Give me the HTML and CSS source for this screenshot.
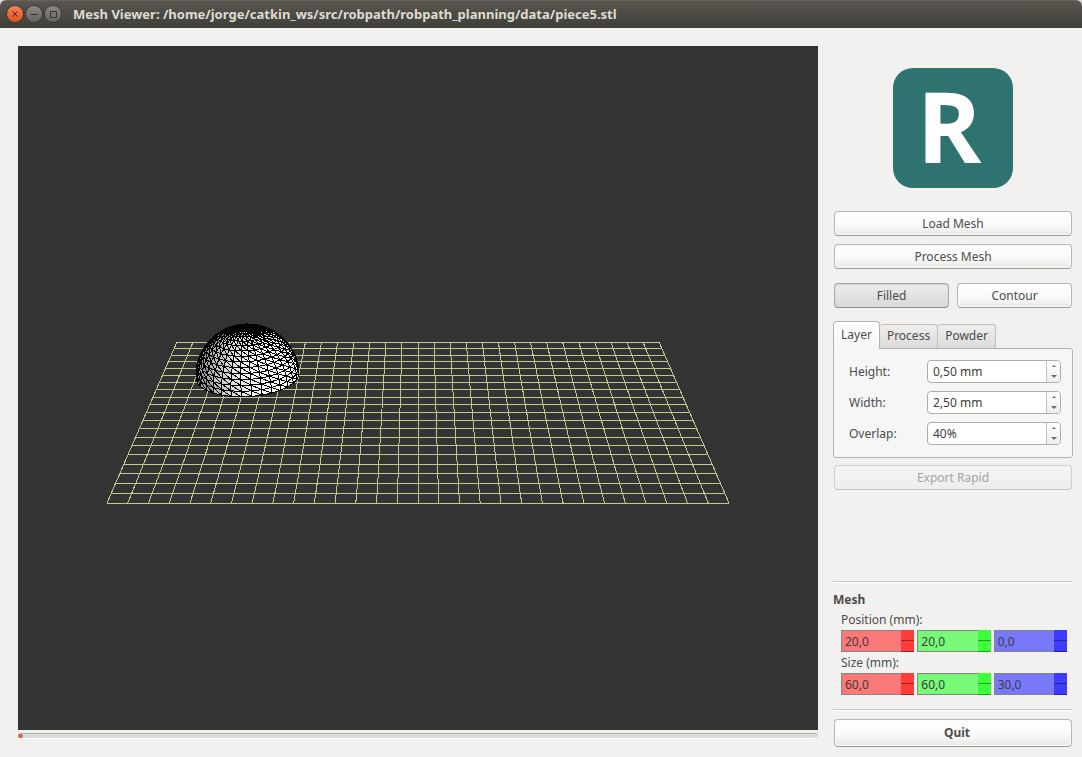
FILE: index.html
```html
<!DOCTYPE html>
<html lang="en">
<head>
<meta charset="utf-8">
<title>Mesh Viewer</title>
<link rel="stylesheet" href="styles.css">
</head>
<body>
<div class="window">
  <header class="titlebar">
    <div class="controls">
      <button class="control close" type="button" aria-label="Close">
        <svg viewBox="0 0 16 16"><path d="M5.500 5.500l5 5M10.500 5.500l-5 5"/></svg>
      </button>
      <button class="control" type="button" aria-label="Minimize">
        <svg viewBox="0 0 16 16"><path d="M4.500 8.500h7"/></svg>
      </button>
      <button class="control" type="button" aria-label="Maximize">
        <svg viewBox="0 0 16 16"><path d="M5.500 5.500h6v6h-6z"/></svg>
      </button>
    </div>
    <h1 class="title">Mesh Viewer: /home/jorge/catkin_ws/src/robpath/robpath_planning/data/piece5.stl</h1>
  </header>

  <main class="content">
    <section class="viewer">
      <div class="viewport">
        <svg class="scene" id="scene" viewBox="0 0 800 684" role="img" aria-label="Mesh on the work plane"></svg>
      </div>
      <input class="progress" type="range" min="0" max="100" value="0" aria-label="Layer position">
    </section>

    <aside class="panel">
      <div class="logo">R</div>

      <div class="stack">
        <button class="btn" type="button">Load Mesh</button>
        <button class="btn" type="button">Process Mesh</button>
      </div>

      <div class="pair">
        <button class="btn pressed" type="button" aria-pressed="true">Filled</button>
        <button class="btn" type="button" aria-pressed="false">Contour</button>
      </div>

      <div class="tabs" role="tablist">
        <button class="tab active" type="button" role="tab" aria-selected="true">Layer</button>
        <button class="tab" type="button" role="tab" aria-selected="false">Process</button>
        <button class="tab" type="button" role="tab" aria-selected="false">Powder</button>
      </div>
      <div class="pane" role="tabpanel">
        <div class="field">
          <label for="height">Height:</label>
          <div class="spin">
            <input id="height" type="text" value="0,50 mm">
            <div class="steps">
              <button class="step" type="button" aria-label="Increase height"><svg viewBox="0 0 6 4"><path d="M1 3l2-2 2 2z"/></svg></button>
              <button class="step" type="button" aria-label="Decrease height"><svg viewBox="0 0 6 4"><path d="M0 0h6l-3 3z"/></svg></button>
            </div>
          </div>
        </div>
        <div class="field">
          <label for="width">Width:</label>
          <div class="spin">
            <input id="width" type="text" value="2,50 mm">
            <div class="steps">
              <button class="step" type="button" aria-label="Increase width"><svg viewBox="0 0 6 4"><path d="M1 3l2-2 2 2z"/></svg></button>
              <button class="step" type="button" aria-label="Decrease width"><svg viewBox="0 0 6 4"><path d="M0 0h6l-3 3z"/></svg></button>
            </div>
          </div>
        </div>
        <div class="field">
          <label for="overlap">Overlap:</label>
          <div class="spin">
            <input id="overlap" type="text" value="40%">
            <div class="steps">
              <button class="step" type="button" aria-label="Increase overlap"><svg viewBox="0 0 6 4"><path d="M1 3l2-2 2 2z"/></svg></button>
              <button class="step" type="button" aria-label="Decrease overlap"><svg viewBox="0 0 6 4"><path d="M0 0h6l-3 3z"/></svg></button>
            </div>
          </div>
        </div>
      </div>

      <div class="export">
        <button class="btn" type="button" disabled>Export Rapid</button>
      </div>

      <section class="mesh">
        <h2 class="mesh-title">Mesh</h2>
        <fieldset class="axes">
          <legend>Position (mm):</legend>
          <div class="axis-row">
            <div class="axis red"><input type="text" value="20,0" aria-label="Position X"><div class="axis-steps"><button type="button" aria-label="Increase position X"></button><button type="button" aria-label="Decrease position X"></button></div></div>
            <div class="axis green"><input type="text" value="20,0" aria-label="Position Y"><div class="axis-steps"><button type="button" aria-label="Increase position Y"></button><button type="button" aria-label="Decrease position Y"></button></div></div>
            <div class="axis blue"><input type="text" value="0,0" aria-label="Position Z"><div class="axis-steps"><button type="button" aria-label="Increase position Z"></button><button type="button" aria-label="Decrease position Z"></button></div></div>
          </div>
        </fieldset>
        <fieldset class="axes">
          <legend>Size (mm):</legend>
          <div class="axis-row">
            <div class="axis red"><input type="text" value="60,0" aria-label="Size X"><div class="axis-steps"><button type="button" aria-label="Increase size X"></button><button type="button" aria-label="Decrease size X"></button></div></div>
            <div class="axis green"><input type="text" value="60,0" aria-label="Size Y"><div class="axis-steps"><button type="button" aria-label="Increase size Y"></button><button type="button" aria-label="Decrease size Y"></button></div></div>
            <div class="axis blue"><input type="text" value="30,0" aria-label="Size Z"><div class="axis-steps"><button type="button" aria-label="Increase size Z"></button><button type="button" aria-label="Decrease size Z"></button></div></div>
          </div>
        </fieldset>
      </section>

      <div class="footer">
        <button class="btn quit" type="button">Quit</button>
      </div>
    </aside>
  </main>
</div>
<script src="scene.js"></script>
</body>
</html>
```

FILE: styles.css
```css
* {
  box-sizing: border-box;
}

body {
  margin: 0;
  background: #d8d6d3;
  color: #4c4c4c;
  font-family: "Noto Sans", "Open Sans", sans-serif;
  font-size: 12px;
  line-height: 16px;
}

button,
input {
  margin: 0;
  padding: 0;
  border: 0;
  color: inherit;
  font: inherit;
}

input {
  color: #3c3c3c;
}

.window {
  display: flex;
  flex-direction: column;
  min-height: 100vh;
  overflow: hidden;
  border-radius: 6px 6px 0 0;
  background: #f2f1f0;
}

.titlebar {
  display: flex;
  align-items: center;
  gap: 12px;
  height: 28px;
  padding: 0 7px 1px;
  border-top: 1px solid #66645c;
  background: linear-gradient(#59574f, #3f3e39);
}

.controls {
  display: flex;
  gap: 3px;
}

.control {
  width: 16px;
  height: 16px;
  border-radius: 50%;
  background: linear-gradient(#8b8982, #65635d);
  box-shadow: 0 0 0 1px #383732;
}

.control.close {
  background: linear-gradient(#f4825c, #e2511f);
}

.control svg {
  display: block;
  width: 16px;
  height: 16px;
  fill: none;
  stroke: #35342f;
  stroke-width: 1;
}

.title {
  margin: 0;
  color: #dfdbd2;
  font-size: 13px;
  font-weight: 700;
  white-space: nowrap;
}

.content {
  display: flex;
  flex: 1;
  gap: 15px;
  padding: 18px 9px 10px 18px;
}

.viewer {
  display: flex;
  flex: 1;
  flex-direction: column;
  gap: 3px;
  min-width: 0;
  padding-bottom: 8px;
}

.viewport {
  display: flex;
  flex: 1;
  background: #333;
}

.scene {
  display: block;
  width: 100%;
  shape-rendering: crispEdges;
}

.grid-line {
  fill: none;
  stroke: #c6c68e;
  stroke-width: 1;
}

.facet {
  stroke: #000;
  stroke-width: 1;
}

.progress {
  width: 100%;
  height: 6px;
  appearance: none;
  border-top: 1px solid #b4b1ad;
  border-bottom: 1px solid #fff;
  border-radius: 3px;
  background: #dedcda;
}

.progress::-webkit-slider-thumb {
  width: 5px;
  height: 4px;
  appearance: none;
  border: 1px solid #b95a38;
  border-radius: 2px;
  background: #f07746;
}

.panel {
  display: flex;
  flex: 0 0 240px;
  flex-direction: column;
  min-width: 0;
  padding-top: 22px;
}

.logo {
  align-self: center;
  width: 120px;
  height: 120px;
  padding-right: 8px;
  border-radius: 20px;
  background: #2f7371;
  color: #fff;
  font-family: "Open Sans", "Noto Sans", sans-serif;
  font-size: 98px;
  font-weight: 700;
  line-height: 114px;
  text-align: center;
}

.stack {
  display: flex;
  flex-direction: column;
  gap: 8px;
  padding: 23px 1px 14px;
}

.pair {
  display: grid;
  grid-template-columns: 1fr 1fr;
  gap: 8px;
  padding: 0 1px 13px;
}

.btn {
  width: 100%;
  height: 25px;
  border: 1px solid #bab7b3;
  border-bottom-color: #9d9a96;
  border-radius: 4px;
  background: linear-gradient(#fff, #fbfbfb 50%, #eae9e8);
  box-shadow: inset 0 0 0 1px #fbfafa;
}

.btn.pressed {
  border-color: #aaa7a3;
  border-bottom-color: #918e8a;
  background: linear-gradient(#eeedec, #dad8d6);
  box-shadow: inset 0 1px 2px #d2d0ce;
}

.btn:disabled {
  border-color: #d2d0cd;
  border-bottom-color: #c5c2bf;
  background: linear-gradient(#f6f5f5, #eeedec);
  box-shadow: none;
  color: #a5a4a2;
}

.tabs {
  display: flex;
  align-items: flex-end;
  height: 27px;
}

.tab {
  height: 24px;
  padding: 0 7px 1px;
  border: 1px solid #c2bfbb;
  border-bottom: 0;
  border-left: 0;
  border-radius: 3px 3px 0 0;
  background: linear-gradient(#f0efee, #dddbd9);
}

.tab.active {
  position: relative;
  height: 28px;
  margin-bottom: -1px;
  border: 1px solid #b6b3ae;
  border-bottom: 0;
  border-radius: 4px 4px 0 0;
  background: linear-gradient(#fff, #f6f6f6);
}

.pane {
  display: flex;
  flex-direction: column;
  gap: 8px;
  padding: 11px 11px 12px 15px;
  border: 1px solid #b6b3ae;
  border-radius: 0 3px 3px 3px;
  background: #f6f6f6;
}

.field {
  display: flex;
  align-items: center;
  justify-content: space-between;
}

.spin {
  display: flex;
  width: 134px;
  height: 23px;
  overflow: hidden;
  border: 1px solid #b0ada8;
  border-radius: 4px;
  background: #fff;
}

.spin input {
  flex: 1;
  min-width: 0;
  padding-left: 5px;
  background: none;
}

.steps {
  display: flex;
  flex: 0 0 14px;
  flex-direction: column;
  border-left: 1px solid #c4c1bd;
  background: linear-gradient(#fff, #efeeed);
}

.step {
  display: grid;
  flex: 1;
  place-items: center;
  background: none;
}

.step svg {
  width: 6px;
  height: 4px;
  fill: #6a6a6a;
}

.export {
  padding: 7px 1px 0;
}

.mesh {
  margin-top: auto;
  padding: 8px 6px 13px 0;
  border-top: 1px solid #c6c3c0;
  box-shadow: inset 0 1px #fff;
}

.mesh-title {
  margin: 0;
  font-size: 12px;
  font-weight: 700;
  line-height: 20px;
}

.axes {
  min-width: 0;
  margin: 0;
  padding: 0 0 0 8px;
  border: 0;
}

.axes legend {
  padding: 0;
  line-height: 20px;
}

.axis-row {
  display: grid;
  grid-template-columns: repeat(3, minmax(0, 1fr));
  gap: 3px;
  padding-bottom: 1px;
}

.axis {
  display: flex;
  height: 22px;
  border: 1px solid #858585;
  border-right: 0;
}

.axis input {
  flex: 1;
  min-width: 0;
  padding: 2px 0 0 3px;
  background: none;
}

.axis-steps {
  display: grid;
  flex: 0 0 13px;
  grid-template-rows: 1fr 1fr;
  margin: -1px 0;
}

.axis-steps button {
  border-bottom: 1px solid rgba(0, 0, 0, 0.4);
  background: none;
}

.red {
  background: #fa7878;
}

.red .axis-steps {
  background: #ff3c3c;
}

.green {
  background: #78fa78;
}

.green .axis-steps {
  background: #3cff3c;
}

.blue {
  background: #7878fa;
}

.blue .axis-steps {
  background: #3c3cff;
}

.footer {
  padding: 9px 1px 0;
  border-top: 1px solid #c6c3c0;
  box-shadow: inset 0 1px #fff;
}

.btn.quit {
  height: 28px;
  padding-left: 8px;
  font-weight: 700;
}
```

FILE: scene.js
```js
const NS = "http://www.w3.org/2000/svg";
const scene = document.getElementById("scene");

// Perspective projection of a point in millimetres: u to the right,
// v towards the viewer, h upwards.
function project(u, v, h) {
  const w = 1 - 0.001124 * v - 0.000521 * h;
  return [
    400 + ((u - 150) * 1.607) / w,
    342 + (-46 + 0.6756 * v - 1.458 * h) / w
  ];
}

function add(tag, className, attrs) {
  const node = document.createElementNS(NS, tag);
  node.setAttribute("class", className);
  for (const key in attrs) node.setAttribute(key, attrs[key]);
  scene.appendChild(node);
}

function line(a, b) {
  add("path", "grid-line", { d: `M${a[0]} ${a[1]}L${b[0]} ${b[1]}` });
}

for (let u = 0; u <= 300; u += 10) line(project(u, 0, 0), project(u, 200, 0));
for (let v = 0; v <= 200; v += 10) {
  const a = project(0, v, 0);
  const b = project(300, v, 0);
  const y = Math.floor(a[1] + 0.3) + 0.5;
  line([a[0], y], [b[0], y]);
}

// Hemisphere of radius 30 centred on (50, 50).
const SLICES = 32;
const RINGS = 14;
const light = [0.7, 0.6, 0.35];

function dome(i, j) {
  const lon = (i / SLICES) * 2 * Math.PI;
  const lat = (j / RINGS) * (Math.PI / 2);
  return [Math.cos(lat) * Math.sin(lon), Math.cos(lat) * Math.cos(lon), Math.sin(lat)];
}

function facet(points) {
  const p = points.map(n => project(50 + 30 * n[0], 50 + 30 * n[1], 30 * n[2]));
  const area = (p[1][0] - p[0][0]) * (p[2][1] - p[0][1]) - (p[2][0] - p[0][0]) * (p[1][1] - p[0][1]);
  if (area >= 0) return;
  const n = [0, 1, 2].map(k => (points[0][k] + points[1][k] + points[2][k]) / 3);
  const dot = n[0] * light[0] + n[1] * light[1] + n[2] * light[2];
  const tone = Math.round(Math.min(250, 160 + 110 * Math.max(0, dot)));
  add("polygon", "facet", { points: p.map(q => q.join(",")).join(" "), fill: `rgb(${tone},${tone},${tone})` });
}

for (let j = 0; j < RINGS; j++) {
  for (let i = 0; i < SLICES; i++) {
    const a = dome(i, j);
    const b = dome(i + 1, j);
    const c = dome(i + 1, j + 1);
    const d = dome(i, j + 1);
    facet([a, b, d]);
    facet([b, c, d]);
  }
}
```
